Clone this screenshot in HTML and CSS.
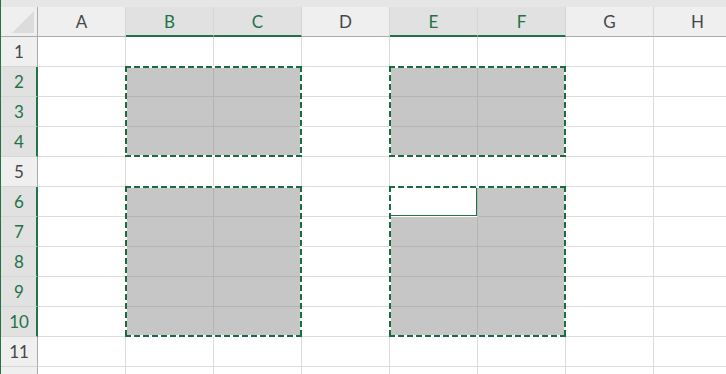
FILE: index.html
```html
<!DOCTYPE html>
<html lang="ja">
<head>
  <meta charset="UTF-8" />
  <meta name="viewport" content="width=device-width, initial-scale=1.0"/>
  <title>Sheet1</title>
  <link rel="stylesheet" href="styles.css">
</head>
<body>

<div class="window">
  <div class="strip"></div>

  <div class="sheet">
    <div class="grid">
      <!-- header row -->
      <div class="corner"><span class="tri"></span></div>
      <div class="h">A</div>
      <div class="h on">B</div>
      <div class="h on">C</div>
      <div class="h">D</div>
      <div class="h on">E</div>
      <div class="h on">F</div>
      <div class="h">G</div>
      <div class="h">H</div>

      <!-- 1 -->
      <div class="rh">1</div>
      <div class="c"></div><div class="c"></div><div class="c"></div><div class="c"></div>
      <div class="c"></div><div class="c"></div><div class="c"></div><div class="c"></div>

      <!-- 2 -->
      <div class="rh on">2</div>
      <div class="c"></div><div class="c s"></div><div class="c s"></div><div class="c"></div>
      <div class="c s"></div><div class="c s"></div><div class="c"></div><div class="c"></div>

      <!-- 3 -->
      <div class="rh on">3</div>
      <div class="c"></div><div class="c s"></div><div class="c s"></div><div class="c"></div>
      <div class="c s"></div><div class="c s"></div><div class="c"></div><div class="c"></div>

      <!-- 4 -->
      <div class="rh on">4</div>
      <div class="c"></div><div class="c s"></div><div class="c s"></div><div class="c"></div>
      <div class="c s"></div><div class="c s"></div><div class="c"></div><div class="c"></div>

      <!-- 5 -->
      <div class="rh">5</div>
      <div class="c"></div><div class="c"></div><div class="c"></div><div class="c"></div>
      <div class="c"></div><div class="c"></div><div class="c"></div><div class="c"></div>

      <!-- 6 -->
      <div class="rh on">6</div>
      <div class="c"></div><div class="c s"></div><div class="c s"></div><div class="c"></div>
      <div class="c act"></div><div class="c s"></div><div class="c"></div><div class="c"></div>

      <!-- 7 -->
      <div class="rh on">7</div>
      <div class="c"></div><div class="c s"></div><div class="c s"></div><div class="c"></div>
      <div class="c s"></div><div class="c s"></div><div class="c"></div><div class="c"></div>

      <!-- 8 -->
      <div class="rh on">8</div>
      <div class="c"></div><div class="c s"></div><div class="c s"></div><div class="c"></div>
      <div class="c s"></div><div class="c s"></div><div class="c"></div><div class="c"></div>

      <!-- 9 -->
      <div class="rh on">9</div>
      <div class="c"></div><div class="c s"></div><div class="c s"></div><div class="c"></div>
      <div class="c s"></div><div class="c s"></div><div class="c"></div><div class="c"></div>

      <!-- 10 -->
      <div class="rh on">10</div>
      <div class="c"></div><div class="c s"></div><div class="c s"></div><div class="c"></div>
      <div class="c s"></div><div class="c s"></div><div class="c"></div><div class="c"></div>

      <!-- 11 -->
      <div class="rh">11</div>
      <div class="c"></div><div class="c"></div><div class="c"></div><div class="c"></div>
      <div class="c"></div><div class="c"></div><div class="c"></div><div class="c"></div>

      <!-- 12 (only the top edge shows) -->
      <div class="rh"></div>
      <div class="c"></div><div class="c"></div><div class="c"></div><div class="c"></div>
      <div class="c"></div><div class="c"></div><div class="c"></div><div class="c"></div>
    </div>

    <!-- copy marquees drawn over the cells -->
    <div class="grid overlay">
      <div class="ants b2"></div>
      <div class="ants e2"></div>
      <div class="ants b6"></div>
      <div class="ants e6"></div>
    </div>
  </div>
</div>

</body>
</html>
```

FILE: styles.css
```css
* { box-sizing: border-box; }

html, body {
  margin: 0;
  padding: 0;
  background: #fff;
  overflow: hidden;
}

body {
  font-family: Lato, "Noto Sans", "Noto Sans CJK JP", sans-serif;
  width: 726px;
  height: 374px;
}

.window {
  height: 374px;
  border-left: 1px solid #217346;
  overflow: hidden;
}

.strip {
  height: 7px;
  background: #e6e6e6;
}

.sheet {
  position: relative;
}

.grid {
  display: grid;
  grid-template-columns: 37px repeat(8, 88px);
  grid-template-rows: repeat(13, 30px);
}

/* headers */
.corner {
  background: #efefef;
  border-right: 1px solid #ababab;
  border-bottom: 1px solid #ababab;
  position: relative;
}

.tri {
  position: absolute;
  right: 3px;
  bottom: 3px;
  width: 22px;
  height: 22px;
  background: #dcdcdc;
  clip-path: polygon(100% 0, 100% 100%, 0 100%);
}

.h {
  background: #efefef;
  color: #474747;
  font-size: 17px;
  display: flex;
  align-items: center;
  justify-content: center;
  border-right: 1px solid #d6d6d6;
  border-bottom: 1px solid #ababab;
}

.h.on {
  background: #e1e1e1;
  color: #217346;
  border-bottom: 2px solid #217346;
  padding-top: 1px;
}

.rh {
  background: #efefef;
  color: #474747;
  font-size: 17px;
  display: flex;
  align-items: center;
  justify-content: center;
  border-right: 1px solid #ababab;
  border-bottom: 1px solid #d6d6d6;
}

.rh.on {
  background: #e1e1e1;
  color: #217346;
  border-right: 2px solid #217346;
  padding-left: 1px;
}

/* cells */
.c {
  border-right: 1px solid #dcdcdc;
  border-bottom: 1px solid #dcdcdc;
}

.c.s {
  background: #c6c6c6;
  border-color: #b4b4b4;
}

.c.act {
  background: #fff;
  border-right-color: #b4b4b4;
  border-bottom-color: #fff;
  box-shadow: inset 0 0 0 1px #217346;
}

/* marching ants */
.overlay {
  position: absolute;
  inset: 0;
  pointer-events: none;
}

.ants {
  margin: -1px 0 0 -1px;
  background:
    repeating-linear-gradient(90deg, #1b6b40 0 6px, #fff 6px 9px) left top / 100% 2px no-repeat,
    repeating-linear-gradient(90deg, #1b6b40 0 6px, #fff 6px 9px) left bottom / 100% 2px no-repeat,
    repeating-linear-gradient(180deg, #1b6b40 0 6px, #fff 6px 9px) left top / 2px 100% no-repeat,
    repeating-linear-gradient(180deg, #1b6b40 0 6px, #fff 6px 9px) right top / 2px 100% no-repeat;
}

.b2 { grid-column: 3 / 5; grid-row: 3 / 6; }
.e2 { grid-column: 6 / 8; grid-row: 3 / 6; }
.b6 { grid-column: 3 / 5; grid-row: 7 / 12; }
.e6 { grid-column: 6 / 8; grid-row: 7 / 12; }
```
